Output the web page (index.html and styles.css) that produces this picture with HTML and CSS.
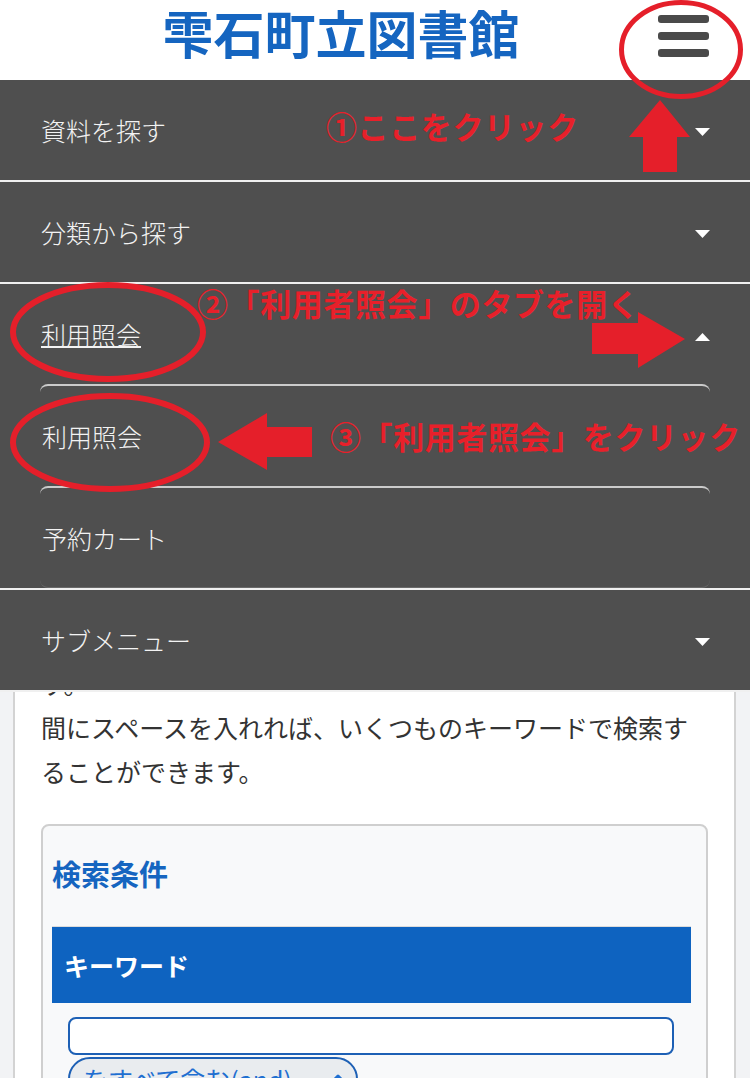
FILE: index.html
```html
<!DOCTYPE html>
<html lang="ja">
<head>
<meta charset="utf-8">
<title>雫石町立図書館</title>
<link rel="stylesheet" href="styles.css">
</head>
<body>
<header class="site-header">
  <div class="brand"><h1 class="site-title">雫石町立図書館</h1></div>
  <button class="menu-toggle" aria-label="メニュー"><span class="bar"></span><span class="bar"></span><span class="bar"></span></button>
</header>

<nav class="drawer">
  <ul class="drawer-list">
    <li class="drawer-item">
      <a class="drawer-link"><span>資料を探す</span><svg class="caret" width="15" height="8" viewBox="0 0 15 8"><polygon points="0,0 15,0 7.5,8" fill="#fff"/></svg></a>
    </li>
    <li class="drawer-item">
      <a class="drawer-link"><span>分類から探す</span><svg class="caret" width="15" height="8" viewBox="0 0 15 8"><polygon points="0,0 15,0 7.5,8" fill="#fff"/></svg></a>
    </li>
    <li class="drawer-item is-open">
      <a class="drawer-link"><span class="current">利用照会</span><svg class="caret caret-up" width="15" height="8" viewBox="0 0 15 8"><polygon points="0,8 15,8 7.5,0" fill="#fff"/></svg></a>
      <ul class="sub-list">
        <li class="sub-item"><a class="sub-link">利用照会</a></li>
        <li class="sub-item"><a class="sub-link">予約カート</a></li>
      </ul>
    </li>
    <li class="drawer-item">
      <a class="drawer-link"><span>サブメニュー</span><svg class="caret" width="15" height="8" viewBox="0 0 15 8"><polygon points="0,0 15,0 7.5,8" fill="#fff"/></svg></a>
    </li>
  </ul>
</nav>

<main class="page">
  <section class="card">
    <h2 class="card-title">キーワード検索</h2>
    <p class="help">蔵書の中から読みたい資料を探すことができます。<br>書名・著者名・出版者・件名などの言葉を入力して、<br>「検索」ボタンを押してください。<br>検索結果の一覧から資料を選ぶと、詳しい情報が<br>表示されます。<br>貸出中の資料は予約することができます。<br>予約した資料は「利用照会」から確認できます。<br>ひらがな・カタカナ・漢字のどれでも検索できます。<br>キーワードを入力すると、該当する資料を一覧で表示します。</p>
    <p class="help">間にスペースを入れれば、いくつものキーワードで検索することができます。</p>

    <div class="search-box">
      <h3 class="search-box-title">検索条件</h3>
      <div class="field">
        <div class="field-label">キーワード</div>
        <div class="field-body">
          <input class="text-input" type="text">
          <div class="select-pill">
            <span>をすべて含む(and)</span>
            <svg class="chev" width="20" height="12" viewBox="0 0 20 12"><polyline points="3,10 10,3 17,10" fill="none" stroke="#1f6fd1" stroke-width="3" stroke-linecap="round" stroke-linejoin="round"/></svg>
          </div>
        </div>
      </div>
    </div>
  </section>
</main>

<div class="annotations">
  <svg class="marks" width="750" height="1078" viewBox="0 0 750 1078">
    <g fill="none" stroke="#e51f2a">
      <ellipse cx="681" cy="49.5" rx="59.5" ry="47" stroke-width="5"/>
      <ellipse cx="108" cy="332" rx="95" ry="47" stroke-width="6"/>
      <ellipse cx="110" cy="442.5" rx="97" ry="46.5" stroke-width="6"/>
    </g>
    <g fill="#e51f2a">
      <polygon points="660,100 690,137 677,137 677,172 643,172 643,137 629,137"/>
      <polygon points="592,323 638,323 638,312 685,339 638,368 638,354 592,354"/>
      <polygon points="218,442 267,413 267,427 312,427 312,457 267,457 267,470"/>
    </g>
  </svg>
  <p class="note note-1">①ここをクリック</p>
  <p class="note note-2">②「利用者照会」のタブを開く</p>
  <p class="note note-3">③「利用者照会」をクリック</p>
</div>
</body>
</html>
```

FILE: styles.css
```css
* { box-sizing: border-box; }

html, body {
  margin: 0;
  padding: 0;
}

body {
  position: relative;
  width: 750px;
  min-height: 1078px;
  overflow: hidden;
  font-family: "Noto Sans CJK JP", "Noto Sans", sans-serif;
  background: #f2f3f5;
  color: #333;
}

/* header */
.site-header {
  display: flex;
  align-items: flex-start;
  height: 80px;
  background: #fff;
}

.brand {
  flex: 1;
  padding-left: 24px;
  text-align: center;
}

.site-title {
  margin: 0;
  font-size: 51px;
  line-height: 64px;
  font-weight: 700;
  color: #1565c0;
  white-space: nowrap;
}

.menu-toggle {
  display: flex;
  flex-direction: column;
  gap: 9px;
  width: 51px;
  margin: 15px 41px 0 0;
  padding: 0;
  border: 0;
  background: none;
}

.menu-toggle .bar {
  display: block;
  height: 8px;
  border-radius: 3px;
  background: #4a4a4a;
}

/* drawer menu */
.drawer {
  position: absolute;
  top: 80px;
  left: 0;
  width: 750px;
  background: #4f4f4f;
  z-index: 10;
}

.drawer-list,
.sub-list {
  list-style: none;
  margin: 0;
  padding: 0;
}

.drawer-item {
  border-bottom: 2px solid #f0f0f0;
}

.drawer-link {
  display: flex;
  align-items: center;
  justify-content: space-between;
  height: 100px;
  padding: 0 40px 0 41px;
  font-size: 25px;
  font-weight: 300;
  color: #f3f3f3;
  text-decoration: none;
}

.drawer-link .current {
  text-decoration: underline;
  text-decoration-thickness: 1.5px;
}

.caret {
  display: block;
  margin-top: 3px;
}

.caret-up {
  margin-top: 5px;
}

.sub-list {
  padding: 0 40px;
}

.sub-item {
  border-top: 2px solid #cbcbcb;
  border-radius: 8px;
}

.sub-item:last-child {
  border-bottom: 1px solid #6a6a6a;
}

.sub-link {
  display: flex;
  align-items: center;
  height: 100px;
  padding-left: 2px;
  font-size: 25px;
  font-weight: 300;
  color: #f3f3f3;
  text-decoration: none;
}

.sub-item:last-child .sub-link {
  height: 99px;
}

/* page content */
.page {
  padding: 20px 14px 0 13px;
}

.card {
  background: #fff;
  border: 2px solid #d3d3d3;
  padding: 28px 26px 40px;
}

.card-title {
  margin: 0 0 43px;
  padding: 24px 0;
  font-size: 30px;
  line-height: 44px;
  color: #1565c0;
}

.help {
  margin: 0;
  font-size: 25px;
  line-height: 44px;
  color: #333;
}

.search-box {
  margin-top: 31px;
  border: 2px solid #cfcfcf;
  border-radius: 8px;
  background: #f8f9fa;
  padding: 0 15px 20px 9px;
}

.search-box-title {
  margin: 25px 0 31px;
  font-size: 29px;
  line-height: 44px;
  font-weight: 700;
  color: #1565c0;
}

.field-label {
  display: flex;
  align-items: center;
  height: 77px;
  padding-left: 12px;
  border-top: 1px solid #dcdcdc;
  background: #0e63c0;
  color: #fff;
  font-size: 25px;
  font-weight: 700;
}

.field-body {
  padding: 14px 17px 0 16px;
}

.text-input {
  display: block;
  width: 100%;
  height: 38px;
  border: 2px solid #1d60b5;
  border-radius: 8px;
  background: #fff;
}

.select-pill {
  display: flex;
  align-items: center;
  justify-content: space-between;
  width: 290px;
  height: 44px;
  margin-top: 2px;
  padding: 0 8px 0 13px;
  border: 2px solid #1d60b5;
  border-radius: 22px;
  background: #e9ecef;
  color: #1f6fd1;
  font-size: 25px;
}

.chev {
  display: block;
}

/* instructional overlay */
.annotations {
  position: absolute;
  top: 0;
  left: 0;
  width: 750px;
  height: 1078px;
  z-index: 20;
  pointer-events: none;
}

.marks {
  position: absolute;
  top: 0;
  left: 0;
}

.note {
  position: absolute;
  margin: 0;
  font-size: 31px;
  line-height: 40px;
  font-weight: 700;
  letter-spacing: 0.6px;
  color: #e8202a;
  white-space: nowrap;
}

.note-1 { left: 326px; top: 106px; }
.note-2 { left: 197px; top: 283px; }
.note-3 { left: 330px; top: 416px; }
```
